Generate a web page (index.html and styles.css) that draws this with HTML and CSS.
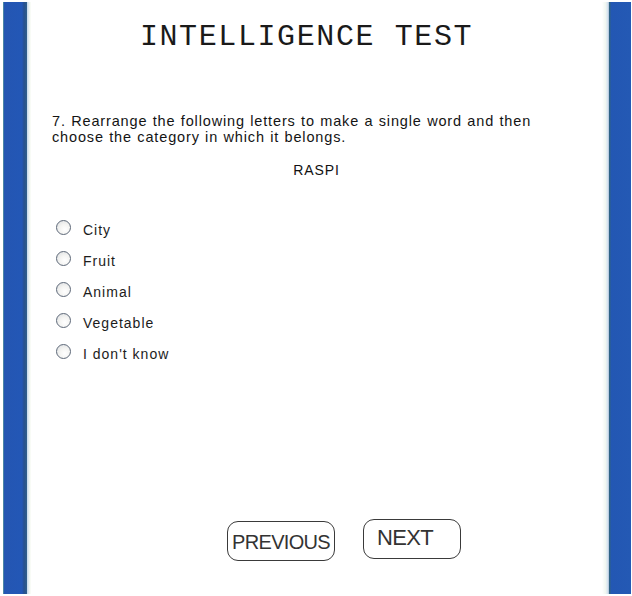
FILE: index.html
```html
<!DOCTYPE html>
<html lang="en">
<head>
<meta charset="utf-8">
<title>Intelligence Test</title>
<link rel="stylesheet" href="styles.css">
</head>
<body>
<div class="page">
  <div class="rail rail-left"></div>
  <div class="glow glow-left"></div>
  <main class="sheet">
    <h1 class="title">INTELLIGENCE TEST</h1>
    <p class="question">7. Rearrange the following letters to make a single word and then choose the category in which it belongs.</p>
    <p class="scramble">RASPI</p>
    <form class="options">
      <label class="option"><input type="radio" name="q7" value="city"><span>City</span></label>
      <label class="option"><input type="radio" name="q7" value="fruit"><span>Fruit</span></label>
      <label class="option"><input type="radio" name="q7" value="animal"><span>Animal</span></label>
      <label class="option"><input type="radio" name="q7" value="vegetable"><span>Vegetable</span></label>
      <label class="option"><input type="radio" name="q7" value="unknown"><span>I don't know</span></label>
    </form>
    <nav class="nav">
      <button class="btn btn-prev" type="button">PREVIOUS</button>
      <button class="btn btn-next" type="button">NEXT</button>
    </nav>
  </main>
  <div class="glow glow-right"></div>
  <div class="rail rail-right"></div>
</div>
</body>
</html>
```
FILE: styles.css
```css
html, body {
  margin: 0;
  padding: 0;
  background: #ffffff;
}

body {
  width: 632px;
  height: 596px;
  overflow: hidden;
}

.page {
  display: flex;
  height: 596px;
  box-sizing: border-box;
  padding: 2px 1px 2px 3px;
}

/* blue side rails */
.rail {
  width: 24px;
  flex: none;
}

.rail-left {
  background: linear-gradient(to right,
    #4a86a6 0, #4a86a6 1px,
    #2456b2 1px, #2357b6 19px,
    #27508f 21px, #2f5f8c 24px);
}

.rail-right {
  width: 22px;
  background: linear-gradient(to right,
    #2e6284 0, #2e6284 1px,
    #2357b3 2px, #2459b4 22px);
}

.glow {
  width: 4px;
  flex: none;
}

.glow-left {
  background: linear-gradient(to right, #c3d6ee, #eef5f2 60%, #fdfef8);
}

.glow-right {
  width: 7px;
  background: linear-gradient(to right, #ffffff, #f1f7f1 50%, #d7e3ef 80%, #a9bfd6);
}

/* white question sheet */
.sheet {
  flex: 1;
  display: flex;
  flex-direction: column;
  font-family: "Liberation Sans", Arial, sans-serif;
  color: #111;
}

.title {
  margin: 20px 20px 0 0;
  font-family: "Liberation Mono", "Courier New", monospace;
  font-weight: normal;
  font-size: 30px;
  line-height: 30px;
  text-align: center;
  color: #1a1a1a;
  letter-spacing: 1.6px;
}

.question {
  margin: 61px 30px 0 21px;
  font-size: 14.5px;
  line-height: 16px;
  letter-spacing: 0.85px;
  word-spacing: 0.5px;
  color: #141414;
}

.scramble {
  margin: 17px 0 0 0;
  font-size: 14px;
  line-height: 16px;
  letter-spacing: 0.9px;
  text-align: center;
}

.options {
  margin: 41px 0 0 25px;
  display: flex;
  flex-direction: column;
  gap: 15px;
}

.option {
  display: flex;
  align-items: center;
  gap: 12px;
  height: 16px;
  font-size: 14px;
  letter-spacing: 1px;
  color: #1c1c1c;
}

.option span {
  position: relative;
  top: 3px;
}

.option input {
  appearance: none;
  -webkit-appearance: none;
  margin: 0;
  width: 15px;
  height: 15px;
  border-radius: 50%;
  border: 1px solid #5d6878;
  box-sizing: border-box;
  background: radial-gradient(circle at 60% 65%, #ffffff 0, #f4f4f2 45%, #d9dcdf 100%);
}

.nav {
  margin: auto 0 33px 0;
  padding-left: 196px;
  display: flex;
  align-items: flex-start;
  gap: 28px;
}

.btn {
  height: 40px;
  box-sizing: border-box;
  border: 1.5px solid #3a3a3a;
  border-radius: 11px;
  background: #ffffff;
  color: #333333;
  font-family: "Liberation Sans", Arial, sans-serif;
  font-size: 20px;
  letter-spacing: -0.7px;
  line-height: 1;
  cursor: pointer;
}

.btn-prev {
  width: 108px;
  margin-top: 2px;
  padding: 2px 0 0 0;
  text-align: center;
}

.btn-next {
  width: 98px;
  padding: 0 0 2px 13px;
  text-align: left;
  font-size: 22px;
}
```
